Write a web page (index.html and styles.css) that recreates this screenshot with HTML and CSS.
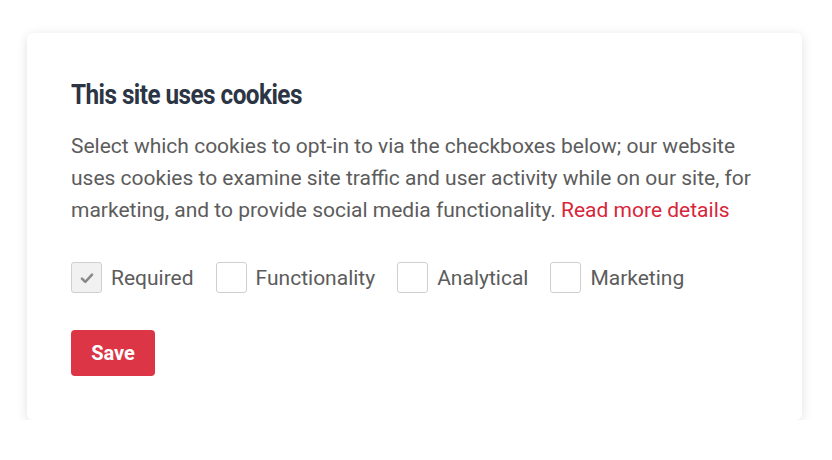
FILE: index.html
```html
<!DOCTYPE html>
<html lang="en">
<head>
  <meta charset="UTF-8">
  <title>Cookie consent</title>
  <link rel="stylesheet" href="styles.css">
</head>
<body>

  <div class="cookie-card">
    <h2 class="cookie-title">This site uses cookies</h2>
    <p class="cookie-text">
      Select which cookies to opt-in to via the checkboxes below; our website uses cookies to examine site traffic and user activity while on our site, for marketing, and to provide social media functionality.
      <a href="#" class="cookie-link">Read more details</a>
    </p>

    <div class="cookie-options">
      <label class="option">
        <span class="box checked disabled">
          <svg viewBox="0 0 16 16" width="18" height="18"><path d="M3.5 8.5 L6.5 11.5 L12.5 5" fill="none" stroke="#888" stroke-width="2.2" stroke-linecap="round" stroke-linejoin="round"/></svg>
        </span>
        Required
      </label>
      <label class="option"><span class="box"></span>Functionality</label>
      <label class="option"><span class="box"></span>Analytical</label>
      <label class="option"><span class="box"></span>Marketing</label>
    </div>

    <button class="save-btn">Save</button>
  </div>

</body>
</html>
```

FILE: styles.css
```css
body {
  font-family: Roboto, 'Liberation Sans', sans-serif;
  background-color: #fff;
  margin: 0;
  padding: 33px 30px 0 27px;
}

.cookie-card {
  background-color: #fff;
  border-radius: 6px;
  box-shadow: 0 2px 12px rgba(0, 0, 0, 0.12);
  padding: 46px 44px 44px 44px;
  height: 387px;
  box-sizing: border-box;
}

.cookie-title {
  margin: 0 0 19px;
  font-size: 27px;
  font-weight: 700;
  color: #2b3544;
  letter-spacing: -0.6px;
  transform: scaleX(0.9);
  transform-origin: left;
  line-height: 32px;
}

.cookie-text {
  margin: 0;
  font-size: 21px;
  line-height: 32px;
  color: #5c5c5c;
}

.cookie-link {
  color: #d7263a;
  text-decoration: none;
}

.cookie-options {
  display: flex;
  gap: 22px;
  margin-top: 36px;
  align-items: center;
}

.option {
  display: flex;
  align-items: center;
  gap: 9px;
  font-size: 21px;
  color: #5c5c5c;
}

.box {
  width: 29px;
  height: 29px;
  border: 1px solid #cfcfcf;
  border-radius: 3px;
  background: #fff;
  display: flex;
  align-items: center;
  justify-content: center;
}

.box.disabled {
  background: #f1f1f1;
}

.save-btn {
  display: block;
  margin-top: 37px;
  background-color: #dc3545;
  color: #fff;
  border: none;
  border-radius: 4px;
  font-family: Roboto, sans-serif;
  font-weight: 700;
  font-size: 20px;
  width: 84px;
  height: 46px;
  cursor: pointer;
}
```
